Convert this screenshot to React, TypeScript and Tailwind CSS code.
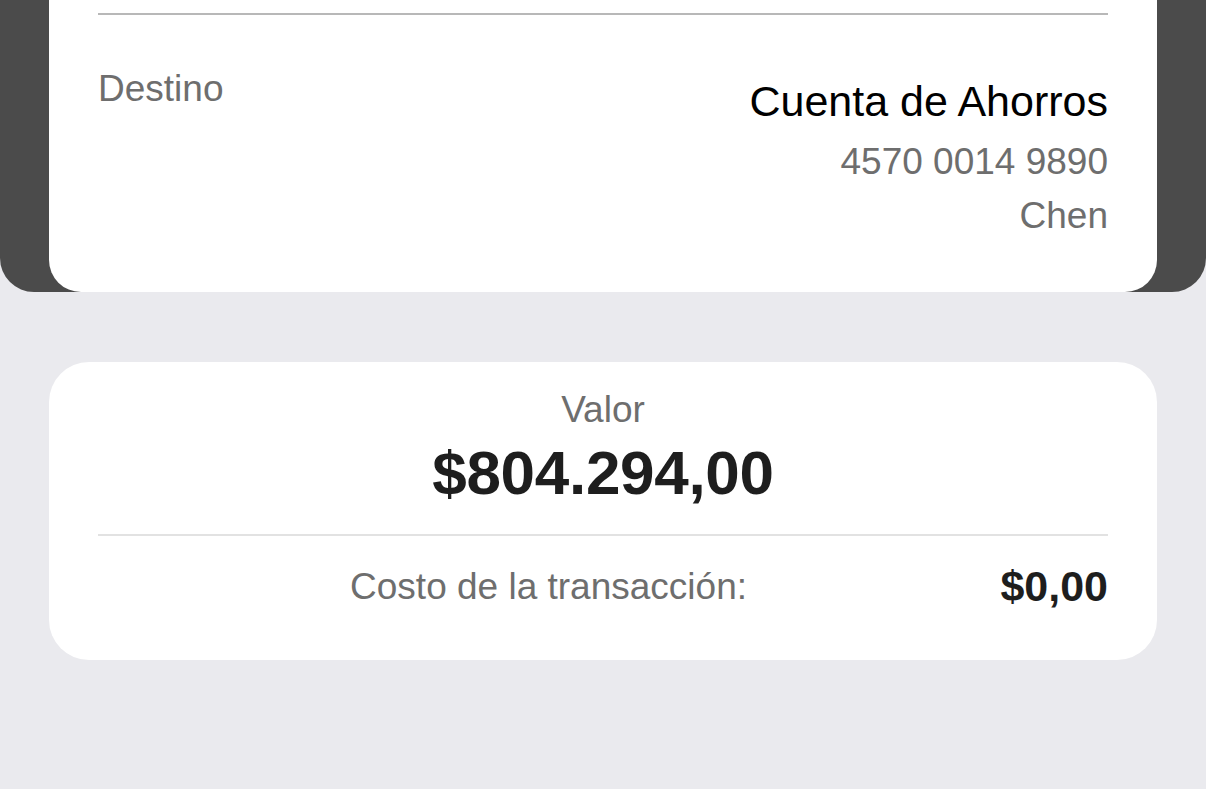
export default function App() {
    return (
        <div
            className="min-h-[789px] w-full bg-[#eaeaee] overflow-hidden"
            style={{ fontFamily: '"Liberation Sans", Arial, sans-serif' }}
        >
            {/* header band with the account card */}
            <div className="bg-[#4b4b4b] rounded-b-[34px] px-[49px]">
                <div className="bg-white rounded-b-[32px] -mb-[5px] relative px-[49px] pt-[13px] pb-[55px]">
                    <div className="h-[2px] bg-[#b8b8b8]" />
                    <div className="flex justify-between items-start pt-[52px]">
                        <p className="text-[37px] leading-[43px] text-[#6e6e6e]">Destino</p>
                        <div className="flex flex-col items-end mt-[9px]">
                            <p className="text-[43px] leading-[50px] text-black">Cuenta de Ahorros</p>
                            <p className="text-[37px] leading-[43px] text-[#6e6e6e] mt-[14px]">4570 0014 9890</p>
                            <p className="text-[37px] leading-[43px] text-[#6e6e6e] mt-[11px]">Chen</p>
                        </div>
                    </div>
                </div>
            </div>

            {/* amount card */}
            <div className="mx-[49px] mt-[75px] bg-white rounded-[40px] px-[49px] pt-[26px] pb-[52px]">
                <div className="flex flex-col items-center">
                    <p className="text-[37px] leading-[43px] text-[#6e6e6e]">Valor</p>
                    <p className="text-[62px] leading-[66px] font-bold tracking-[-0.3px] text-[#1e1e1e] mt-[9px]">
                        $804.294,00
                    </p>
                </div>
                <div className="h-[2px] bg-[#e2e2e2] mt-[28px]" />
                <div className="flex items-center mt-[29px]">
                    <p className="flex-1 text-right text-[37px] leading-[43px] text-[#6e6e6e]">
                        Costo de la transacción:
                    </p>
                    <p className="w-[361px] text-right text-[43px] leading-[43px] font-bold text-[#1e1e1e]">
                        $0,00
                    </p>
                </div>
            </div>
        </div>
    );
}
